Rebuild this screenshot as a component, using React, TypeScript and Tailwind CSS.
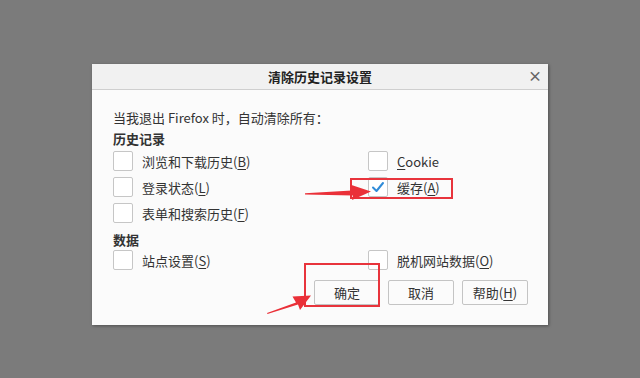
import React from "react";

const font = { fontFamily: '"Noto Sans CJK SC", "Noto Sans", sans-serif' };

function Box({ checked = false }: { checked?: boolean }) {
  return (
    <div className="w-[20px] h-[20px] shrink-0 border border-[#c6c6c6] rounded-[2px] bg-white flex items-center justify-center">
      {checked && (
        <svg width="14" height="12" viewBox="0 0 14 12">
          <path d="M2 6.5 L5.5 10 L12 2" fill="none" stroke="#2f8bd8" strokeWidth="2" strokeLinecap="round" strokeLinejoin="round" />
        </svg>
      )}
    </div>
  );
}

function Item({ label, acc, checked = false, accFirst = false }: { label: string; acc: string; checked?: boolean; accFirst?: boolean }) {
  return (
    <div className="flex items-center h-[20px]">
      <Box checked={checked} />
      <span className="ml-[9px] text-[13px] text-[#333] leading-none whitespace-nowrap">
        {accFirst ? (
          <>
            <span className="underline underline-offset-2">{acc}</span>
            {label}
          </>
        ) : (
          <>
            {label}(<span className="underline underline-offset-2">{acc}</span>)
          </>
        )}
      </span>
    </div>
  );
}

function Btn({ children }: { children: React.ReactNode }) {
  return (
    <div className="w-[66px] h-[25px] border border-[#c4c4c4] rounded-[2px] bg-[#fbfbfb] flex items-center justify-center text-[13px] text-[#333]">
      {children}
    </div>
  );
}

export default function App() {
  return (
    <div className="relative w-[640px] h-[378px] bg-[#7b7b7b] overflow-hidden pt-[64px] pl-[92px]" style={font}>
      <div className="w-[456px] h-[261px] bg-[#fbfbfb] shadow-[1px_1px_3px_rgba(0,0,0,0.35)] flex flex-col">
        <div className="h-[26px] bg-[#f1f1f1] border-b border-[#cfcfcf] flex items-center relative">
          <div className="flex-1 text-center text-[13px] font-semibold text-[#222]">清除历史记录设置</div>
          <div className="absolute right-[6px] top-[4px] text-[14px] font-bold text-[#666] leading-none">×</div>
        </div>
        <div className="flex flex-col pl-[21px] pr-[20px]">
          <div className="mt-[20px] h-[16px] flex items-center text-[13px] text-[#333] whitespace-nowrap">当我退出 Firefox 时，自动清除所有：</div>
          <div className="mt-[5px] h-[16px] flex items-center text-[13px] font-bold text-[#333]">历史记录</div>
          <div className="mt-[4px] grid grid-cols-[255px_1fr] gap-y-[6px]">
            <Item label="浏览和下载历史" acc="B" />
            <Item label="ookie" acc="C" accFirst />
            <Item label="登录状态" acc="L" />
            <Item label="缓存" acc="A" checked />
            <Item label="表单和搜索历史" acc="F" />
            <div />
          </div>
          <div className="mt-[9px] h-[16px] flex items-center text-[13px] font-bold text-[#333]">数据</div>
          <div className="mt-[2px] grid grid-cols-[255px_1fr]">
            <Item label="站点设置" acc="S" />
            <Item label="脱机网站数据" acc="O" />
          </div>
          <div className="mt-[10px] flex justify-end gap-[8px]">
            <Btn>确定</Btn>
            <Btn>取消</Btn>
            <Btn>
              帮助(<span className="underline underline-offset-2">H</span>)
            </Btn>
          </div>
        </div>
      </div>

      <div className="absolute left-[350px] top-[178px] w-[103px] h-[21px] border-2 border-[#e8343c]" />
      <div className="absolute left-[304px] top-[263px] w-[76px] h-[44px] border-2 border-[#e8343c]" />
      <svg className="absolute left-0 top-0" width="640" height="378" viewBox="0 0 640 378">
        <polygon points="305,193.2 352,190.5 350,184.5 371,191.5 352,200 353,195.5 305,194.4" fill="#ea3038" />
        <polygon points="267,313 296,302.5 292.5,296.5 311,295.5 300,310 298,304.5 267.5,314" fill="#ea3038" />
      </svg>
    </div>
  );
}
